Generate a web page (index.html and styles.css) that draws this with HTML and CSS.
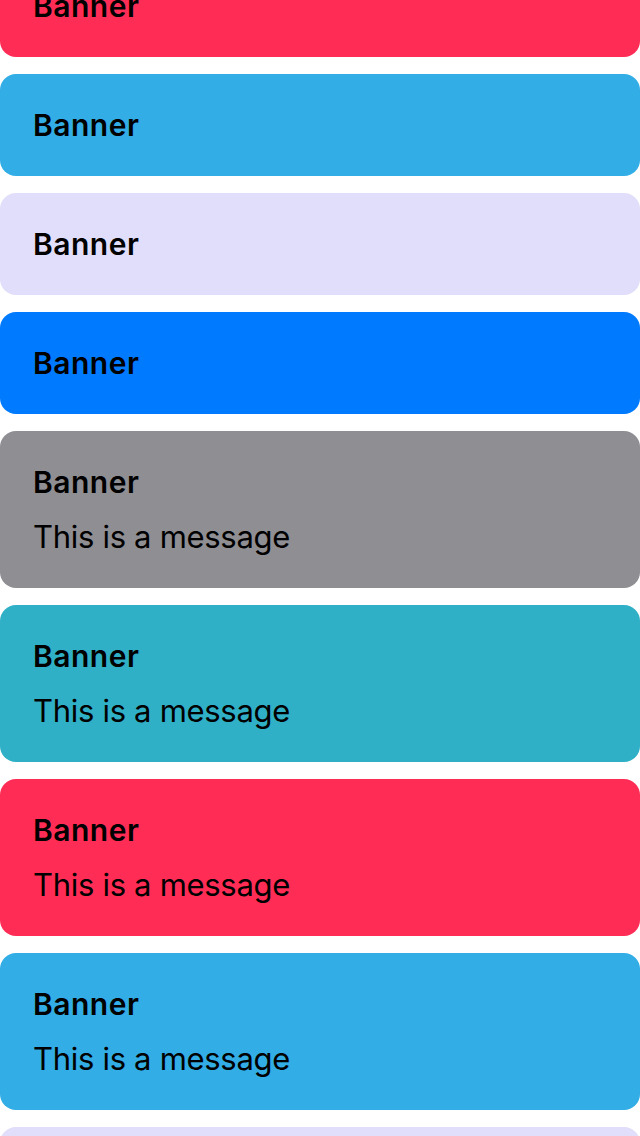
FILE: index.html
```html
<!DOCTYPE html>
<html>
<head>
<meta charset="utf-8">
<link rel="stylesheet" href="styles.css">
</head>
<body>
<div class="list">
  <div class="banner pink"><div class="title">Banner</div></div>
  <div class="banner cyan"><div class="title">Banner</div></div>
  <div class="banner lavender"><div class="title">Banner</div></div>
  <div class="banner blue"><div class="title">Banner</div></div>
  <div class="banner gray"><div class="title">Banner</div><div class="message">This is a message</div></div>
  <div class="banner teal"><div class="title">Banner</div><div class="message">This is a message</div></div>
  <div class="banner pink"><div class="title">Banner</div><div class="message">This is a message</div></div>
  <div class="banner cyan"><div class="title">Banner</div><div class="message">This is a message</div></div>
  <div class="banner lavender"><div class="title">Banner</div><div class="message">This is a message</div></div>
</div>
</body>
</html>
```
FILE: styles.css
```css
html, body {
  margin: 0;
  padding: 0;
  background: #ffffff;
  overflow: hidden;
  height: 1136px;
}
.list {
  display: flex;
  flex-direction: column;
  gap: 17px;
  margin-top: -45px;
  font-family: Inter, "Noto Sans", sans-serif;
  color: #000;
}
.banner {
  border-radius: 16px;
  padding: 31px 33px;
  display: flex;
  flex-direction: column;
  gap: 15px;
}
.title {
  font-size: 30px;
  font-weight: 600;
  line-height: 40px;
  letter-spacing: 0.5px;
}
.message {
  font-size: 31px;
  font-weight: 400;
  line-height: 40px;
  letter-spacing: -0.3px;
}
.pink { background: #ff2d55; }
.cyan { background: #32ade6; }
.lavender { background: #e0defa; }
.blue { background: #007aff; }
.gray { background: #8e8e93; }
.teal { background: #30b0c7; }
```
